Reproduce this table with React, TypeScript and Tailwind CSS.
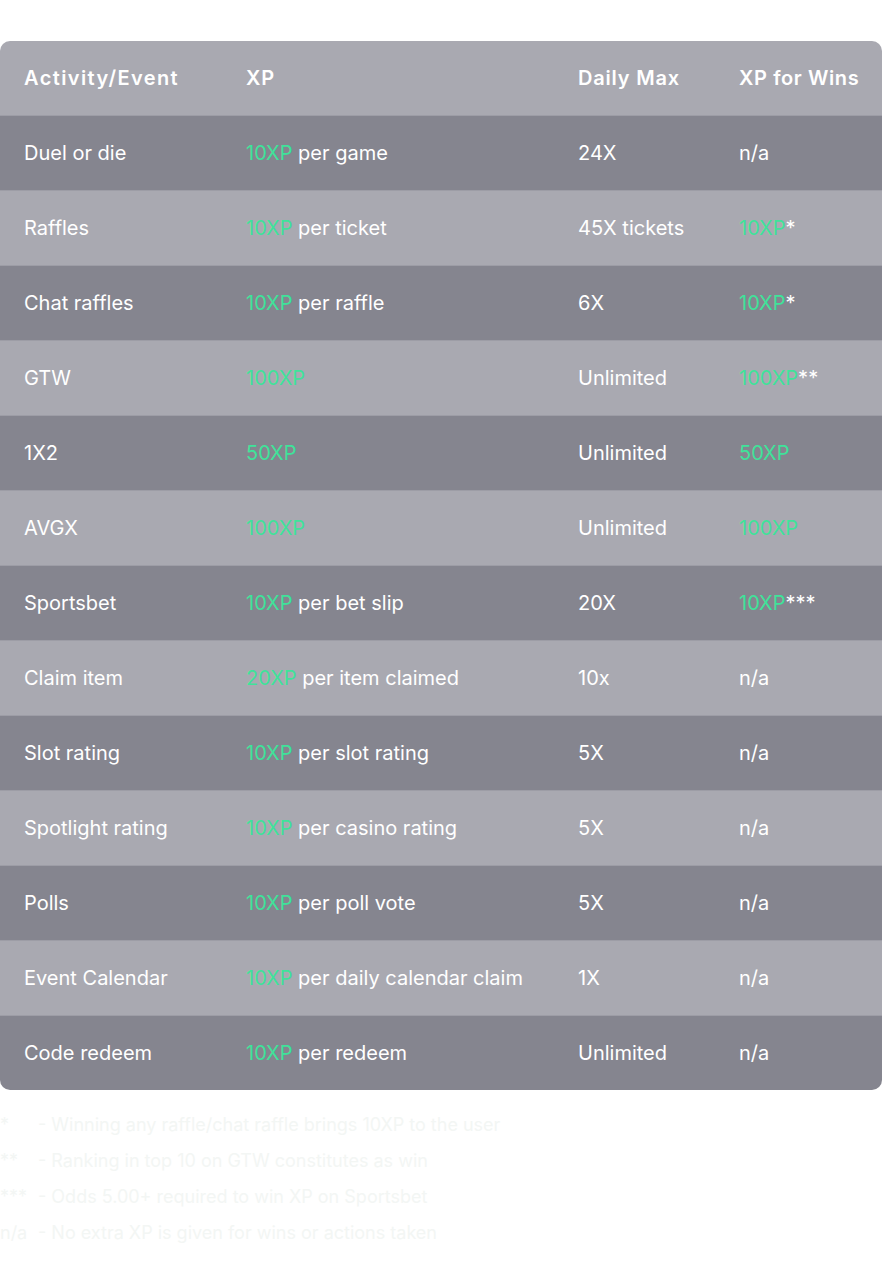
import React from 'react';

type Row = {
  activity: string;
  xp: string;
  xpSuffix?: string;
  max: string;
  win?: string;
  winMark?: string;
};

const rows: Row[] = [
  { activity: 'Duel or die', xp: '10XP', xpSuffix: 'per game', max: '24X' },
  { activity: 'Raffles', xp: '10XP', xpSuffix: 'per ticket', max: '45X tickets', win: '10XP', winMark: '*' },
  { activity: 'Chat raffles', xp: '10XP', xpSuffix: 'per raffle', max: '6X', win: '10XP', winMark: '*' },
  { activity: 'GTW', xp: '100XP', max: 'Unlimited', win: '100XP', winMark: '**' },
  { activity: '1X2', xp: '50XP', max: 'Unlimited', win: '50XP' },
  { activity: 'AVGX', xp: '100XP', max: 'Unlimited', win: '100XP' },
  { activity: 'Sportsbet', xp: '10XP', xpSuffix: 'per bet slip', max: '20X', win: '10XP', winMark: '***' },
  { activity: 'Claim item', xp: '20XP', xpSuffix: 'per item claimed', max: '10x' },
  { activity: 'Slot rating', xp: '10XP', xpSuffix: 'per slot rating', max: '5X' },
  { activity: 'Spotlight rating', xp: '10XP', xpSuffix: 'per casino rating', max: '5X' },
  { activity: 'Polls', xp: '10XP', xpSuffix: 'per poll vote', max: '5X' },
  { activity: 'Event Calendar', xp: '10XP', xpSuffix: 'per daily calendar claim', max: '1X' },
  { activity: 'Code redeem', xp: '10XP', xpSuffix: 'per redeem', max: 'Unlimited' },
];

const notes = [
  { mark: '*', text: 'Winning any raffle/chat raffle brings 10XP to the user' },
  { mark: '**', text: 'Ranking in top 10 on GTW constitutes as win' },
  { mark: '***', text: 'Odds 5.00+ required to win XP on Sportsbet' },
  { mark: 'n/a', text: 'No extra XP is given for wins or actions taken' },
];

const App: React.FC = () => {
  return (
    <div className="min-h-[1287px] w-[882px] bg-white pt-[41px] font-['Inter','Noto_Sans',sans-serif] text-white">
      <div className="overflow-hidden rounded-[10px]">
        <table className="w-full table-fixed border-collapse text-left text-[20px]">
          <colgroup>
            <col className="w-[222px]" />
            <col className="w-[332px]" />
            <col className="w-[161px]" />
            <col />
          </colgroup>
          <thead>
            <tr className="h-[74px] bg-[#a9a9b1]">
              <th className="pl-6 font-semibold tracking-[1.4px]">Activity/Event</th>
              <th className="pl-6 font-semibold tracking-[0.8px]">XP</th>
              <th className="pl-6 font-semibold tracking-[0.8px]">Daily Max</th>
              <th className="pl-6 font-semibold tracking-[0.6px]">XP for Wins</th>
            </tr>
          </thead>
          <tbody>
            {rows.map((row, i) => (
              <tr
                key={row.activity}
                className={`h-[75px] border-t border-[#9d9da6] ${i % 2 === 0 ? 'bg-[#85858f]' : 'bg-[#a9a9b1]'}`}
              >
                <td className="pl-6">{row.activity}</td>
                <td className="pl-6">
                  <span className="text-[#3fe39a]">{row.xp}</span>
                  {row.xpSuffix && <span> {row.xpSuffix}</span>}
                </td>
                <td className="pl-6">{row.max}</td>
                <td className="pl-6">
                  {row.win ? (
                    <>
                      <span className="text-[#3fe39a]">{row.win}</span>
                      <span>{row.winMark}</span>
                    </>
                  ) : (
                    'n/a'
                  )}
                </td>
              </tr>
            ))}
          </tbody>
        </table>
      </div>

      <div className="mt-[22px] flex flex-col gap-[12px] text-[18px] text-[#f3f6f4]">
        {notes.map((n) => (
          <div key={n.mark} className="flex h-[24px] items-center">
            <span className="w-[38px] shrink-0">{n.mark}</span>
            <span>- {n.text}</span>
          </div>
        ))}
      </div>
    </div>
  );
};

export default App;
